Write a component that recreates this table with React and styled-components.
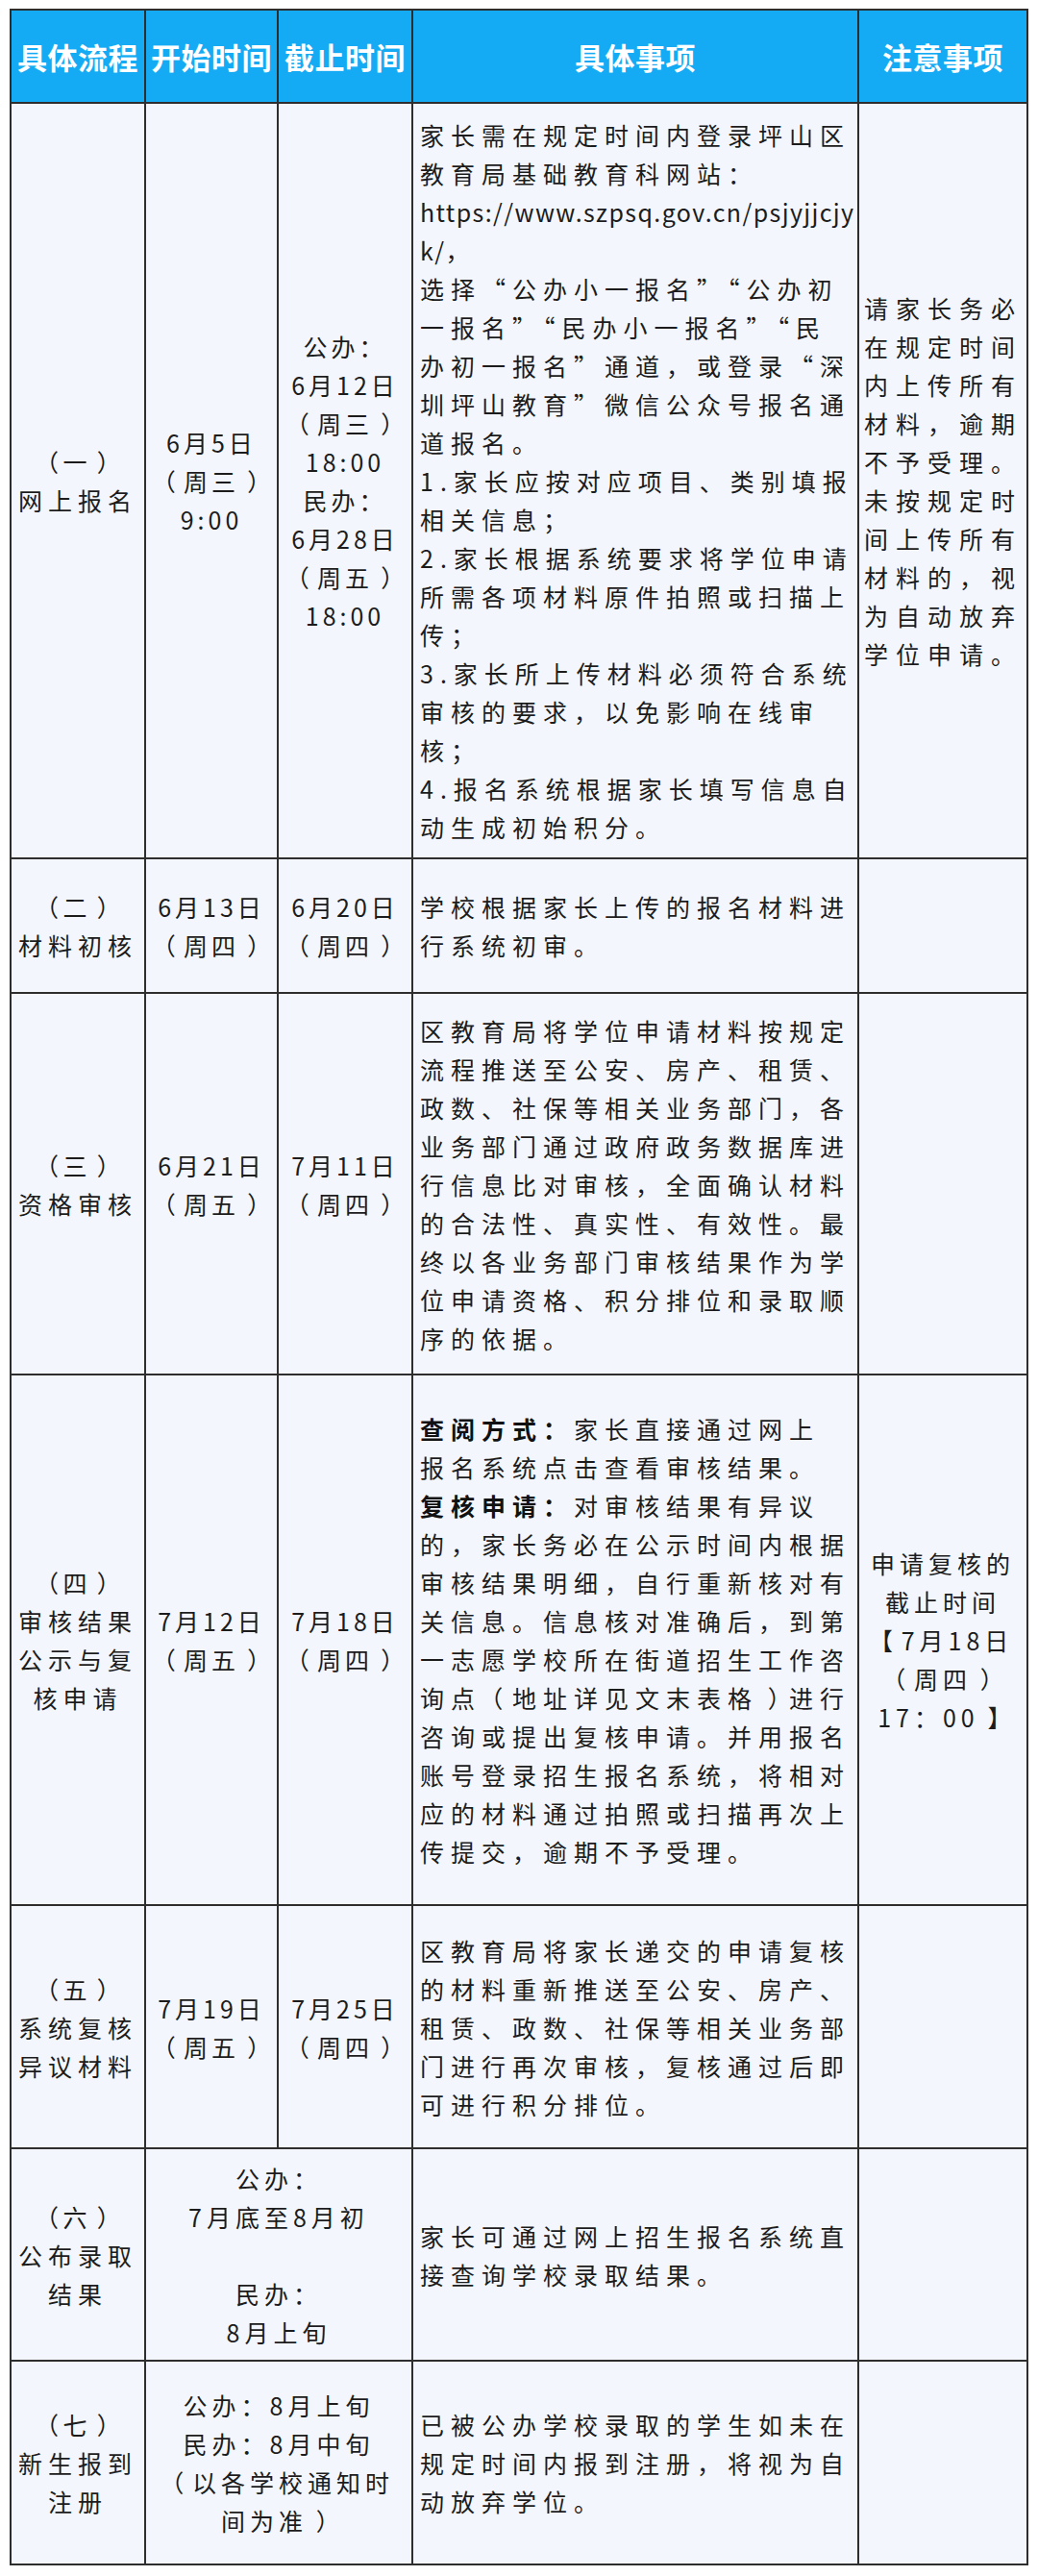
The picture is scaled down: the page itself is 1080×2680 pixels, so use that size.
import React from 'react';
import styled, { createGlobalStyle } from 'styled-components';

const GlobalStyle = createGlobalStyle`
    body {
        margin: 0;
        background-color: #ffffff;
        font-family: "Noto Sans CJK SC", "Noto Sans", sans-serif;
        color: #1c1c1c;
    }
`

const Page = styled.div`
    padding: 9px 0 11px 10px;
`

const Schedule = styled.div`
    display: grid;
    width: max-content;
    grid-template-columns: 138px 136px 138px 462px 174px;
    grid-template-rows: 95px 784px 138px 395px 550px 251px 219px 210px;
    gap: 2px;
    padding: 2px;
    background-color: #2e2e2e;
`

const HeadCell = styled.div`
    display: flex;
    align-items: center;
    justify-content: center;
    background-color: #15abf4;
    color: #ffffff;
    font-size: 31px;
    font-weight: 700;
    letter-spacing: 0.5px;
    white-space: nowrap;
`

const Cell = styled.div`
    display: flex;
    flex-direction: column;
    justify-content: center;
    align-items: ${ ({$align}) => $align === "left" ? "flex-start" : "center" };
    grid-column: ${ ({$span}) => $span ? `span ${$span}` : "auto" };
    padding: ${ ({$pad}) => $pad ? $pad : "0" };
    background-color: #f3f7fd;
    font-size: 25px;
    line-height: 40px;
    letter-spacing: ${ ({$spacing}) => $spacing ? $spacing : "0px" };
    overflow: hidden;
`

const Line = styled.div`
    white-space: nowrap;
    min-height: 40px;
`

// bracket drawn half wide, then centred in a slot as wide as one character plus its spacing
const Bracket = styled.span`
    display: inline-block;
    width: ${ ({$slot}) => $slot ? $slot : "1em" };
    text-align: center;
    letter-spacing: 0;
    font-feature-settings: "halt" 1;
`

const Strong = styled.b`
    font-weight: 700;
    color: #111111;
`

const Url = styled.span`
    letter-spacing: 1.4px;
`

const widen = (text, slot) => text.split(/([（）【】])/).map((part, index) => {
    if (/^[（）【】]$/.test(part)) return <Bracket key={index} $slot={slot}>{part}</Bracket>
    return part
})

const headers = ["具体流程", "开始时间", "截止时间", "具体事项", "注意事项"]

const rows = [
    {
        step: ["（一）", "网上报名"],
        start: ["6月5日", "（周三）", "9:00"],
        end: ["公办：", "6月12日", "（周三）", "18:00", "民办：", "6月28日", "（周五）", "18:00"],
        detail: [
            "家长需在规定时间内登录坪山区",
            "教育局基础教育科网站：",
            <Url>https://www.szpsq.gov.cn/psjyjjcjy</Url>,
            <><Url>k/</Url>，</>,
            "选择“公办小一报名”“公办初",
            "一报名”“民办小一报名”“民",
            "办初一报名”通道，或登录“深",
            "圳坪山教育”微信公众号报名通",
            "道报名。",
            "1.家长应按对应项目、类别填报",
            "相关信息；",
            "2.家长根据系统要求将学位申请",
            "所需各项材料原件拍照或扫描上",
            "传；",
            "3.家长所上传材料必须符合系统",
            "审核的要求，以免影响在线审",
            "核；",
            "4.报名系统根据家长填写信息自",
            "动生成初始积分。",
        ],
        note: [
            "请家长务必", "在规定时间", "内上传所有", "材料，逾期", "不予受理。",
            "未按规定时", "间上传所有", "材料的，视", "为自动放弃", "学位申请。",
        ],
        noteAlign: "left",
    },
    {
        step: ["（二）", "材料初核"],
        start: ["6月13日", "（周四）"],
        end: ["6月20日", "（周四）"],
        detail: ["学校根据家长上传的报名材料进", "行系统初审。"],
    },
    {
        step: ["（三）", "资格审核"],
        start: ["6月21日", "（周五）"],
        end: ["7月11日", "（周四）"],
        detail: [
            "区教育局将学位申请材料按规定",
            "流程推送至公安、房产、租赁、",
            "政数、社保等相关业务部门，各",
            "业务部门通过政府政务数据库进",
            "行信息比对审核，全面确认材料",
            "的合法性、真实性、有效性。最",
            "终以各业务部门审核结果作为学",
            "位申请资格、积分排位和录取顺",
            "序的依据。",
        ],
    },
    {
        step: ["（四）", "审核结果", "公示与复", "核申请"],
        start: ["7月12日", "（周五）"],
        end: ["7月18日", "（周四）"],
        detail: [
            <><Strong>查阅方式：</Strong>家长直接通过网上</>,
            "报名系统点击查看审核结果。",
            <><Strong>复核申请：</Strong>对审核结果有异议</>,
            "的，家长务必在公示时间内根据",
            "审核结果明细，自行重新核对有",
            "关信息。信息核对准确后，到第",
            "一志愿学校所在街道招生工作咨",
            "询点（地址详见文末表格）进行",
            "咨询或提出复核申请。并用报名",
            "账号登录招生报名系统，将相对",
            "应的材料通过拍照或扫描再次上",
            "传提交，逾期不予受理。",
        ],
        note: ["申请复核的", "截止时间", "【7月18日", "（周四）", "17：00】"],
        noteAlign: "center",
    },
    {
        step: ["（五）", "系统复核", "异议材料"],
        start: ["7月19日", "（周五）"],
        end: ["7月25日", "（周四）"],
        detail: [
            "区教育局将家长递交的申请复核",
            "的材料重新推送至公安、房产、",
            "租赁、政数、社保等相关业务部",
            "门进行再次审核，复核通过后即",
            "可进行积分排位。",
        ],
    },
    {
        step: ["（六）", "公布录取", "结果"],
        period: ["公办：", "7月底至8月初", "", "民办：", "8月上旬"],
        detail: ["家长可通过网上招生报名系统直", "接查询学校录取结果。"],
    },
    {
        step: ["（七）", "新生报到", "注册"],
        period: ["公办：8月上旬", "民办：8月中旬", "（以各学校通知时", "间为准）"],
        detail: ["已被公办学校录取的学生如未在", "规定时间内报到注册，将视为自", "动放弃学位。"],
    },
]

const Lines = ({ items, prefix, slot }) => items.map((text, index) => (
    <Line key={`${prefix}_${index}`}>
        {typeof text === "string" ? widen(text, slot) : text}
    </Line>
))

const App = () => {
    return (
        <Page lang="zh-CN">
            <GlobalStyle />
            <Schedule>
                {headers.map((title) => <HeadCell key={title}>{title}</HeadCell>)}
                {rows.map((row, index) => (
                    <React.Fragment key={`row_${index}`}>
                        <Cell $spacing="6px">
                            <Lines items={row.step} prefix={`step_${index}`} slot="0.85em" />
                        </Cell>
                        {row.period ? (
                            <Cell $span={2} $spacing="5px">
                                <Lines items={row.period} prefix={`period_${index}`} slot="1.2em" />
                            </Cell>
                        ) : (
                            <>
                                <Cell $spacing="4px">
                                    <Lines items={row.start} prefix={`start_${index}`} slot="1.16em" />
                                </Cell>
                                <Cell $spacing="4px">
                                    <Lines items={row.end} prefix={`end_${index}`} slot="1.16em" />
                                </Cell>
                            </>
                        )}
                        <Cell $align="left" $pad="0 0 0 7px" $spacing="7px">
                            <Lines items={row.detail} prefix={`detail_${index}`} slot="1.28em" />
                        </Cell>
                        <Cell
                            $align={row.noteAlign === "left" ? "left" : "center"}
                            $pad={row.noteAlign === "left" ? "0 0 0 5px" : "0"}
                            $spacing={row.noteAlign === "left" ? "8px" : "5px"}
                        >
                            {row.note && <Lines items={row.note} prefix={`note_${index}`} slot="1.2em" />}
                        </Cell>
                    </React.Fragment>
                ))}
            </Schedule>
        </Page>
    )
}

export default App
